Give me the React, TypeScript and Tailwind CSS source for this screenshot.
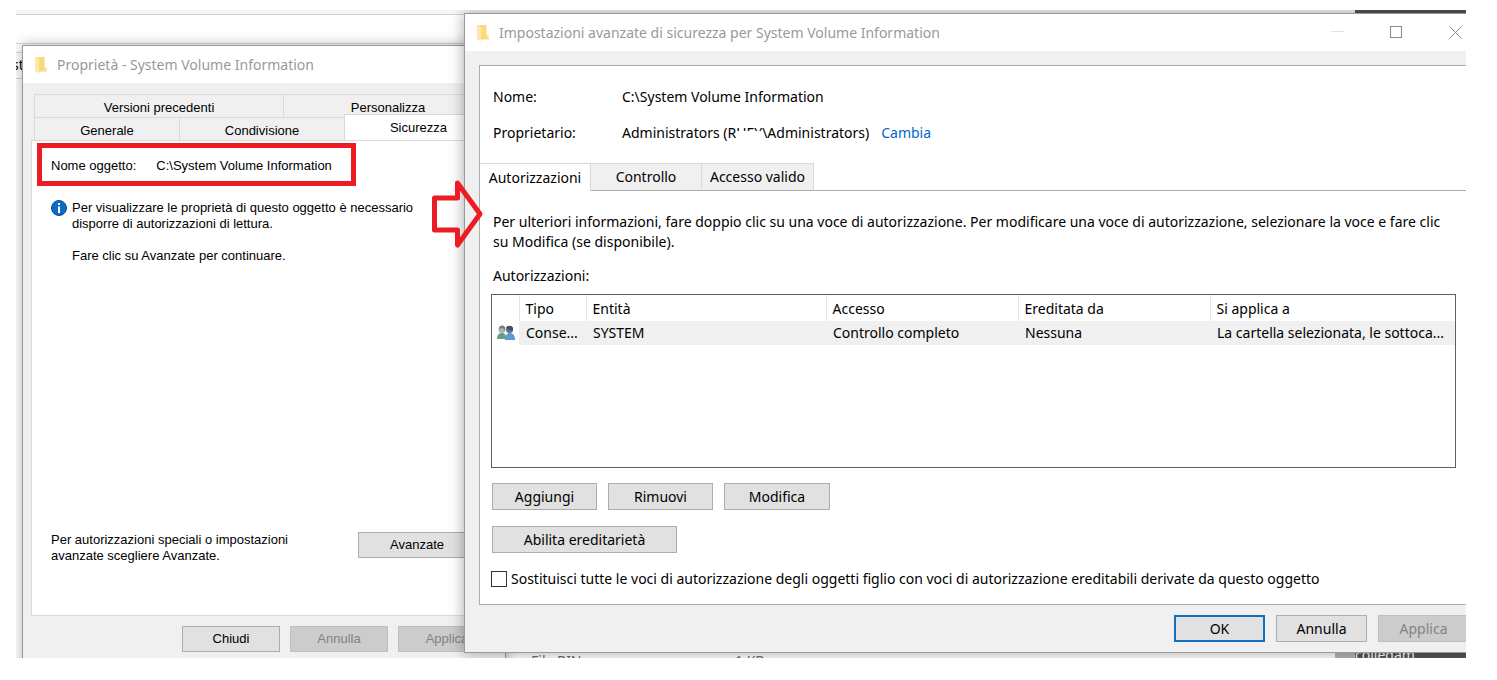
import { ReactNode } from 'react'
import clsx from 'clsx'

interface TabProps {
  label: string
  className?: string
}

interface DialogButtonProps {
  children: ReactNode
  className?: string
  disabled?: boolean
  primary?: boolean
}

interface PermissionEntry {
  type: string
  principal: string
  access: string
  inheritedFrom: string
  appliesTo: string
}

const entries: PermissionEntry[] = [
  {
    type: 'Conse...',
    principal: 'SYSTEM',
    access: 'Controllo completo',
    inheritedFrom: 'Nessuna',
    appliesTo: 'La cartella selezionata, le sottoca...'
  }
]

const columns = ['Tipo', 'Entità', 'Accesso', 'Ereditata da', 'Si applica a']

function FolderIcon() {
  return (
    <svg width="12" height="18" viewBox="0 0 12 18" className="shrink-0" aria-hidden="true">
      <path d="M1 1H9.500V11L11.500 12V15.500H4L1 15Z" fill="#f9d978" />
      <path d="M0 1H1.500L4 3V17.500L0 15Z" fill="#fbe8ae" />
      <path d="M9.500 11L11.500 12V15.500H9.500Z" fill="#fae3a0" />
    </svg>
  )
}

function InfoIcon() {
  return (
    <svg width="16" height="16" viewBox="0 0 16 16" className="shrink-0" aria-hidden="true">
      <circle cx="8" cy="8" r="7.5" fill="#0a6ac4" stroke="#0b4f94" />
      <rect x="7" y="3" width="2" height="2" fill="#fff" />
      <rect x="7" y="6.5" width="2" height="6.5" fill="#fff" />
    </svg>
  )
}

function UsersIcon() {
  return (
    <svg width="18" height="16" viewBox="0 0 18 16" aria-hidden="true">
      <path d="M0 14C0 10 2 8 5 8S9 10 9 14Z" fill="#6b9c82" />
      <circle cx="5" cy="4.5" r="3.5" fill="#a9b8ae" />
      <path d="M2 4C2 1 4 0 6 .5L8 2V6L6 3Z" fill="#6f8079" />
      <path d="M8 15C8 10 10 8 13 8S18 10 18 15Z" fill="#5a9bd8" />
      <circle cx="12.5" cy="4.5" r="3.5" fill="#5f7183" />
      <path d="M9 3C10 0 15 0 16 3V6L13 5Z" fill="#3f5264" />
    </svg>
  )
}

function Arrow() {
  return (
    <svg width="52" height="70" viewBox="0 0 52 70" className="absolute left-[416px] top-[169px]" aria-hidden="true">
      <path
        d="M2.500 19H25.500V4L48 35L25.500 66V51H2.500Z"
        fill="none"
        stroke="#ec1c24"
        strokeWidth="5"
        strokeLinejoin="round"
      />
    </svg>
  )
}

function DialogButton({ children, className, disabled, primary }: DialogButtonProps) {
  return (
    <button
      type="button"
      disabled={disabled}
      className={clsx(
        'flex shrink-0 items-center justify-center',
        primary ? 'border-2 border-[#0f6fc0]' : 'border',
        disabled
          ? 'border-[#bfbfbf] bg-[#cccccc] text-[#838383]'
          : 'bg-[#e1e1e1] text-black',
        !disabled && !primary && 'border-[#adadad]',
        className
      )}
    >
      {children}
    </button>
  )
}

function Tab({ label, className }: TabProps) {
  return (
    <button type="button" role="tab" className={clsx('border-[#d9d9d9]', className)}>
      {label}
    </button>
  )
}

function PropertiesWindow() {
  return (
    <section className="absolute left-[6px] top-[35px] -bottom-3 flex w-[484px] flex-col border border-[#9a9a9a] bg-[#f0f0f0] font-['Liberation_Sans',sans-serif] text-[13px] leading-4 text-black shadow-[0_0_12px_rgba(0,0,0,0.3)]">
      <header className="flex h-[37px] items-center gap-2 bg-white px-3">
        <FolderIcon />
        <h2 className="pl-0.5 font-['Noto_Sans',sans-serif] text-sm text-[#999999]">
          Proprietà - System Volume Information
        </h2>
      </header>

      <div className="flex flex-1 flex-col px-2 pt-[11px]">
        <div role="tablist" className="ml-[3px]">
          <div className="flex h-[23px]">
            <Tab label="Versioni precedenti" className="w-[249px] border-l border-t pt-1" />
            <Tab label="Personalizza" className="w-[210px] border-x border-t pt-1" />
          </div>
          <div className="flex h-[23px]">
            <Tab label="Generale" className="w-[145px] border-l border-t pt-1" />
            <Tab label="Condivisione" className="w-[165px] border-l border-t pt-1" />
            <Tab label="Sicurezza" className="-mt-[3px] w-[149px] border-x border-t bg-white" />
          </div>
        </div>

        <div className="flex h-[476px] flex-col border border-[#d9d9d9] bg-white px-[5px] pt-0.5">
          <div className="flex h-[43px] w-[319px] items-center gap-5 border-5 border-[#ec1c24] pl-[9px] pt-0.5">
            <span>Nome oggetto:</span>
            <span>C:\System Volume Information</span>
          </div>
          <div className="mt-3.5 flex gap-[5px] pl-[14px]">
            <InfoIcon />
            <div>
              <p>
                Per visualizzare le proprietà di questo oggetto è necessario
                <br />
                disporre di autorizzazioni di lettura.
              </p>
              <p className="mt-4">Fare clic su Avanzate per continuare.</p>
            </div>
          </div>
          <div className="mb-[51px] mt-auto flex items-start justify-between pl-[14px] pr-[15px]">
            <p>
              Per autorizzazioni speciali o impostazioni
              <br />
              avanzate scegliere Avanzate.
            </p>
            <DialogButton className="h-[26px] w-[118px]">Avanzate</DialogButton>
          </div>
        </div>

        <footer className="mt-2.5 flex justify-end gap-2.5 pr-px">
          <DialogButton className="h-[26px] w-[98px]">Chiudi</DialogButton>
          <DialogButton disabled className="h-[26px] w-[98px]">Annulla</DialogButton>
          <DialogButton disabled className="h-[26px] w-[98px]">Applica</DialogButton>
        </footer>
      </div>
    </section>
  )
}

function PermissionsTable() {
  return (
    <div className="ml-[11px] mr-2.5 mt-2 h-[174px] border border-[#5f5f5f]">
      <table className="w-full table-fixed border-collapse text-left">
        <colgroup>
          <col className="w-[27px]" />
          <col className="w-[67px]" />
          <col className="w-[240px]" />
          <col className="w-[192px]" />
          <col className="w-[192px]" />
          <col />
        </colgroup>
        <thead>
          <tr className="h-[26px]">
            <th aria-label="Icona" />
            {columns.map((column) => (
              <th key={column} className="border-l border-[#e5e5e5] px-1.5 pb-0 pt-0.5 font-normal">
                {column}
              </th>
            ))}
          </tr>
        </thead>
        <tbody>
          {entries.map((entry) => (
            <tr key={entry.principal} className="h-6 whitespace-nowrap bg-[#f0f0f0]">
              <td className="bg-white p-0 pl-[5px]">
                <UsersIcon />
              </td>
              <td className="px-[7px] py-0">{entry.type}</td>
              <td className="px-[7px] py-0">{entry.principal}</td>
              <td className="px-[7px] py-0">{entry.access}</td>
              <td className="px-[7px] py-0">{entry.inheritedFrom}</td>
              <td className="px-[7px] py-0">{entry.appliesTo}</td>
            </tr>
          ))}
        </tbody>
      </table>
    </div>
  )
}

function SecurityWindow() {
  return (
    <section className="absolute -right-3.5 bottom-[5px] left-[448px] top-[3px] flex flex-col border border-[#9a9a9a] bg-[#f0f0f0] font-['Noto_Sans',sans-serif] text-sm leading-5 text-black shadow-[0_0_14px_rgba(0,0,0,0.35)]">
      <header className="flex h-[37px] shrink-0 items-center justify-between bg-white pl-3 pr-[17px]">
        <div className="flex items-center gap-2.5">
          <FolderIcon />
          <h1 className="text-[#999999]">
            Impostazioni avanzate di sicurezza per System Volume Information
          </h1>
        </div>
        <div className="flex gap-[46px]">
          <button type="button" aria-label="Riduci a icona">
            <svg width="13" height="13" viewBox="0 0 13 13">
              <path d="M0 5.500H13" stroke="#e3e3e3" />
            </svg>
          </button>
          <button type="button" aria-label="Ingrandisci">
            <svg width="13" height="13" viewBox="0 0 13 13">
              <rect x="0.500" y="0.500" width="11" height="11" fill="none" stroke="#8a8a8a" />
            </svg>
          </button>
          <button type="button" aria-label="Chiudi">
            <svg width="13" height="13" viewBox="0 0 13 13">
              <path d="M.5 .5L12.500 12.500M12.500 .5L.5 12.500" stroke="#8a8a8a" />
            </svg>
          </button>
        </div>
      </header>

      <div className="ml-3.5 mt-3.5 flex flex-1 flex-col border border-r-0 border-[#adadad] bg-white">
        <dl className="grid grid-cols-[129px_1fr] gap-y-4 pl-[13px] pt-[21px]">
          <dt>Nome:</dt>
          <dd>C:\System Volume Information</dd>
          <dt>Proprietario:</dt>
          <dd className="flex gap-3">
            <span>
              Administrators (R
              <span className="relative">
                UEY
                <span className="absolute inset-x-0 bottom-0 top-2 bg-white" />
              </span>
              \Administrators)
            </span>
            <a href="#cambia" className="text-[#0066cc]">Cambia</a>
          </dd>
        </dl>

        <div role="tablist" className="mt-5 flex h-7">
          <Tab label="Autorizzazioni" className="w-[111px] border-r border-t bg-white" />
          <Tab label="Controllo" className="w-[111px] border-b border-b-[#adadad] border-r border-t bg-[#f0f0f0]" />
          <Tab label="Accesso valido" className="w-[112px] border-b border-b-[#adadad] border-r border-t bg-[#f0f0f0]" />
          <div className="flex-1 border-b border-[#adadad]" />
        </div>

        <div className="flex-1 pr-[13px]">
          <p className="pl-[13px] pt-[21px]">
            Per ulteriori informazioni, fare doppio clic su una voce di autorizzazione. Per modificare una
            voce di autorizzazione, selezionare la voce e fare clic
            <br />
            su Modifica (se disponibile).
          </p>
          <p className="mt-3.5 px-[13px]">Autorizzazioni:</p>
          <PermissionsTable />
          <div className="mt-[15px] flex gap-[11px] pl-3">
            <DialogButton className="h-[27px] w-[105px]">Aggiungi</DialogButton>
            <DialogButton className="h-[27px] w-[105px]">Rimuovi</DialogButton>
            <DialogButton className="h-[27px] w-[106px]">Modifica</DialogButton>
          </div>
          <div className="mt-4 pl-3">
            <DialogButton className="h-[27px] w-[185px]">Abilita ereditarietà</DialogButton>
          </div>
          <label className="mt-4 flex items-center gap-1 pl-[11px]">
            <input type="checkbox" className="size-4 appearance-none border border-[#333333] bg-white" />
            Sostituisci tutte le voci di autorizzazione degli oggetti figlio con voci di autorizzazione
            ereditabili derivate da questo oggetto
          </label>
        </div>
      </div>

      <footer className="flex h-[47px] shrink-0 justify-end gap-[11px] pr-[10px] pt-2.5">
        <DialogButton primary className="h-[27px] w-[91px]">OK</DialogButton>
        <DialogButton className="h-[27px] w-[91px]">Annulla</DialogButton>
        <DialogButton disabled className="h-[27px] w-[91px]">Applica</DialogButton>
      </footer>
    </section>
  )
}

// File explorer and wallpaper strips that stay visible around the dialogs
function Background() {
  return (
    <div className="flex h-full flex-col justify-between font-['Noto_Sans',sans-serif] text-sm leading-5">
      <div>
        <div className="flex h-[5px] justify-end border-b border-[#d4d4d4] bg-[#f5f6f7]">
          <div className="w-[111px] bg-[#555555]" />
        </div>
        <div className="h-[29px] border-b border-[#d9d9d9]" />
        <div className="mt-2 h-[27px] border-y border-[#d9d9d9] pt-0.5">
          <span className="-ml-1 text-black">st</span>
        </div>
      </div>
      <div className="flex h-[7px] items-start overflow-hidden text-[#6d6d6d]">
        <span className="ml-[515px] w-[204px] shrink-0">File BIN</span>
        <span className="flex-1">1 KB</span>
        <span className="h-full w-5 bg-[#b5b5b5]" />
        <span className="flex h-full w-[111px] items-center bg-[#555555] text-white">collegam...</span>
      </div>
    </div>
  )
}

export default function App() {
  return (
    <main className="h-screen bg-white pb-[22px] pl-4 pr-[31px] pt-2.5">
      <div className="relative h-full overflow-hidden bg-white">
        <Background />
        <PropertiesWindow />
        <SecurityWindow />
        <Arrow />
      </div>
    </main>
  )
}
